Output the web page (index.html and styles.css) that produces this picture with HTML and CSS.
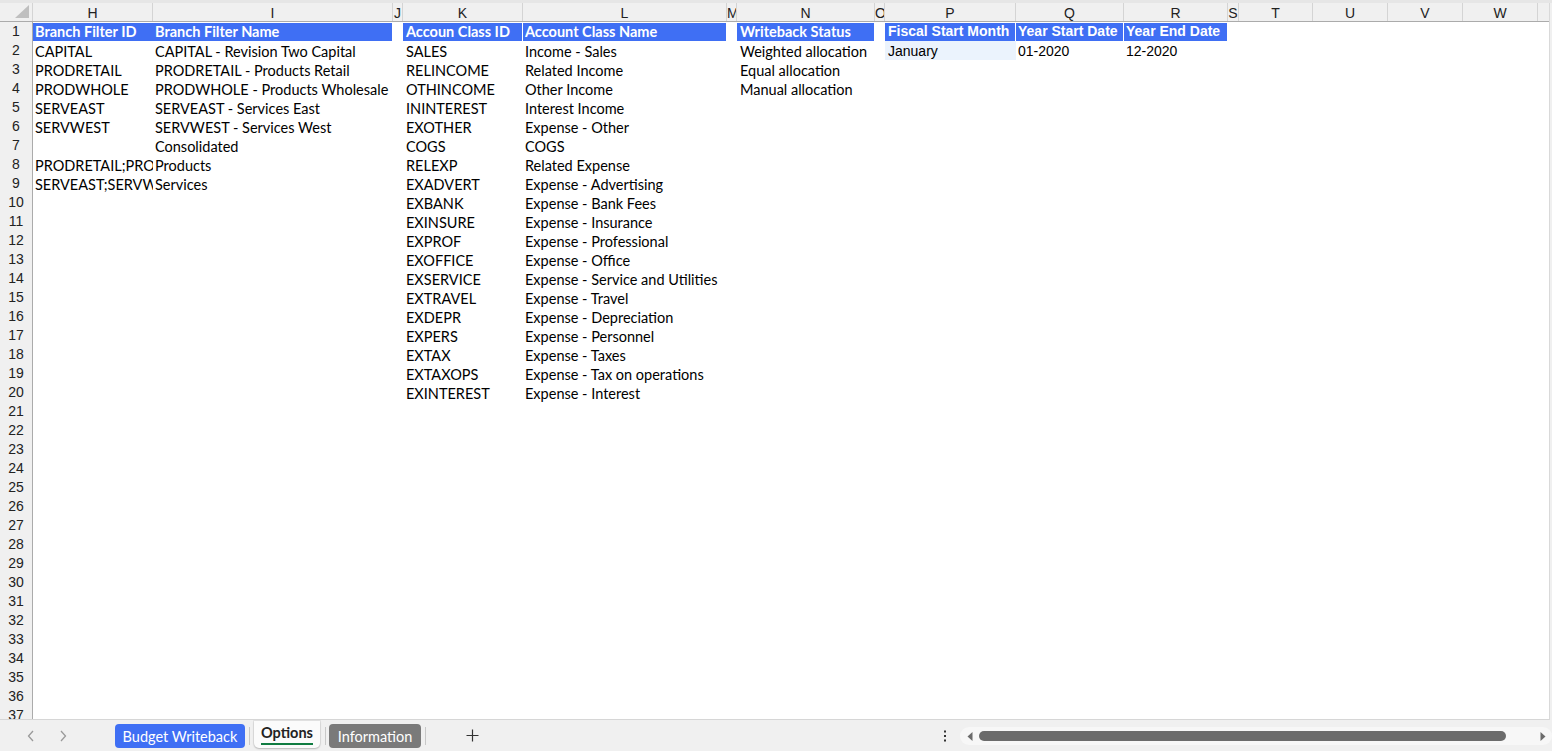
FILE: index.html
```html
<!DOCTYPE html>
<html>
<head>
<meta charset="utf-8">
<link rel="stylesheet" href="styles.css">
</head>
<body>
<div class="app">
  <div class="topstrip"></div>
  <div class="sheet">
    <div class="row colhead">
      <div class="corner"><svg width="14" height="13" viewBox="0 0 14 13"><polygon points="14,0 14,13 0,13" fill="#bfbfbf"/></svg></div>
      <div class="ch">H</div><div class="ch">I</div><div class="ch">J</div><div class="ch">K</div><div class="ch">L</div><div class="ch">M</div><div class="ch">N</div><div class="ch">O</div><div class="ch">P</div><div class="ch">Q</div><div class="ch">R</div><div class="ch">S</div><div class="ch">T</div><div class="ch">U</div><div class="ch">V</div><div class="ch">W</div><div class="ch last"></div>
    </div>
    <div class="row"><div class="rh">1</div>
      <div class="c hd cH nogap">Branch Filter ID</div><div class="c hd cI">Branch Filter Name</div>
      <div class="c hd cK">Accoun Class ID</div><div class="c hd cL">Account Class Name</div>
      <div class="c hd cN">Writeback Status</div>
      <div class="c hd cP arial">Fiscal Start Month</div><div class="c hd cQ arial">Year Start Date</div><div class="c hd cR arial">Year End Date</div>
    </div>
    <div class="row"><div class="rh">2</div>
      <div class="c cH">CAPITAL</div><div class="c cI">CAPITAL - Revision Two Capital</div>
      <div class="c cK">SALES</div><div class="c cL">Income - Sales</div>
      <div class="c cN">Weighted allocation</div>
      <div class="c cP arial sel">January</div><div class="c cQ arial">01-2020</div><div class="c cR arial">12-2020</div>
    </div>
    <div class="row"><div class="rh">3</div>
      <div class="c cH">PRODRETAIL</div><div class="c cI">PRODRETAIL - Products Retail</div>
      <div class="c cK">RELINCOME</div><div class="c cL">Related Income</div>
      <div class="c cN">Equal allocation</div>
    </div>
    <div class="row"><div class="rh">4</div>
      <div class="c cH">PRODWHOLE</div><div class="c cI">PRODWHOLE - Products Wholesale</div>
      <div class="c cK">OTHINCOME</div><div class="c cL">Other Income</div>
      <div class="c cN">Manual allocation</div>
    </div>
    <div class="row"><div class="rh">5</div>
      <div class="c cH">SERVEAST</div><div class="c cI">SERVEAST - Services East</div>
      <div class="c cK">ININTEREST</div><div class="c cL">Interest Income</div>
    </div>
    <div class="row"><div class="rh">6</div>
      <div class="c cH">SERVWEST</div><div class="c cI">SERVWEST - Services West</div>
      <div class="c cK">EXOTHER</div><div class="c cL">Expense - Other</div>
    </div>
    <div class="row"><div class="rh">7</div>
      <div class="c cI">Consolidated</div>
      <div class="c cK">COGS</div><div class="c cL">COGS</div>
    </div>
    <div class="row"><div class="rh">8</div>
      <div class="c cH">PRODRETAIL;PRODWHOLE</div><div class="c cI">Products</div>
      <div class="c cK">RELEXP</div><div class="c cL">Related Expense</div>
    </div>
    <div class="row"><div class="rh">9</div>
      <div class="c cH">SERVEAST;SERVWEST</div><div class="c cI">Services</div>
      <div class="c cK">EXADVERT</div><div class="c cL">Expense - Advertising</div>
    </div>
    <div class="row"><div class="rh">10</div><div class="c cK">EXBANK</div><div class="c cL">Expense - Bank Fees</div></div>
    <div class="row"><div class="rh">11</div><div class="c cK">EXINSURE</div><div class="c cL">Expense - Insurance</div></div>
    <div class="row"><div class="rh">12</div><div class="c cK">EXPROF</div><div class="c cL">Expense - Professional</div></div>
    <div class="row"><div class="rh">13</div><div class="c cK">EXOFFICE</div><div class="c cL">Expense - Office</div></div>
    <div class="row"><div class="rh">14</div><div class="c cK">EXSERVICE</div><div class="c cL">Expense - Service and Utilities</div></div>
    <div class="row"><div class="rh">15</div><div class="c cK">EXTRAVEL</div><div class="c cL">Expense - Travel</div></div>
    <div class="row"><div class="rh">16</div><div class="c cK">EXDEPR</div><div class="c cL">Expense - Depreciation</div></div>
    <div class="row"><div class="rh">17</div><div class="c cK">EXPERS</div><div class="c cL">Expense - Personnel</div></div>
    <div class="row"><div class="rh">18</div><div class="c cK">EXTAX</div><div class="c cL">Expense - Taxes</div></div>
    <div class="row"><div class="rh">19</div><div class="c cK">EXTAXOPS</div><div class="c cL">Expense - Tax on operations</div></div>
    <div class="row"><div class="rh">20</div><div class="c cK">EXINTEREST</div><div class="c cL">Expense - Interest</div></div>
    <div class="row"><div class="rh">21</div></div>
    <div class="row"><div class="rh">22</div></div>
    <div class="row"><div class="rh">23</div></div>
    <div class="row"><div class="rh">24</div></div>
    <div class="row"><div class="rh">25</div></div>
    <div class="row"><div class="rh">26</div></div>
    <div class="row"><div class="rh">27</div></div>
    <div class="row"><div class="rh">28</div></div>
    <div class="row"><div class="rh">29</div></div>
    <div class="row"><div class="rh">30</div></div>
    <div class="row"><div class="rh">31</div></div>
    <div class="row"><div class="rh">32</div></div>
    <div class="row"><div class="rh">33</div></div>
    <div class="row"><div class="rh">34</div></div>
    <div class="row"><div class="rh">35</div></div>
    <div class="row"><div class="rh">36</div></div>
    <div class="row"><div class="rh">37</div></div>
  </div>
  <div class="tabbar">
    <div class="nav"><svg width="8" height="12" viewBox="0 0 8 12"><polyline points="6,1 1.5,6 6,11" fill="none" stroke="#9a9a9a" stroke-width="1.3"/></svg></div>
    <div class="nav"><svg width="8" height="12" viewBox="0 0 8 12"><polyline points="2,1 6.5,6 2,11" fill="none" stroke="#9a9a9a" stroke-width="1.3"/></svg></div>
    <div class="tab blue">Budget Writeback</div>
    <div class="sep"></div>
    <div class="tab active"><span class="ul">Options</span></div>
    <div class="sep"></div>
    <div class="tab gray">Information</div>
    <div class="sep"></div>
    <div class="plus"><svg width="13" height="13" viewBox="0 0 13 13"><path d="M6.5 0.5V12.5M0.5 6.5H12.5" stroke="#333" stroke-width="1.2"/></svg></div>
    <div class="right">
      <div class="dots"><svg width="4" height="14" viewBox="0 0 4 14"><rect x="1" y="1.5" width="2" height="2" fill="#333"/><rect x="1" y="6" width="2" height="2" fill="#333"/><rect x="1" y="10.5" width="2" height="2" fill="#333"/></svg></div>
      <div class="track">
        <svg class="arr" width="6" height="9" viewBox="0 0 6 9"><polygon points="5.5,0 5.5,9 0.5,4.5" fill="#6b6b6b"/></svg>
        <div class="thumb"></div>
        <svg class="arr" width="6" height="9" viewBox="0 0 6 9"><polygon points="0.5,0 0.5,9 5.5,4.5" fill="#6b6b6b"/></svg>
      </div>
    </div>
  </div>
</div>
</body>
</html>
```

FILE: styles.css
```css
* { box-sizing: border-box; }
html, body { margin: 0; padding: 0; }
body { width: 1552px; height: 751px; overflow: hidden; background: #f0f0f0; font-family: "Lato", "Noto Sans", sans-serif; }
.app { width: 1552px; height: 751px; display: flex; flex-direction: column; }
.topstrip { height: 3px; background: #e6e6e6; flex: none; }
.sheet { height: 717px; flex: none; overflow: hidden; background: #fff; width: 1550px; border-right: 1px solid #d9d9d9; border-bottom: 1px solid #d6d6d6; }
.row {
  display: grid;
  grid-template-columns: 33px 120px 240px 10px 120px 204px 10px 138px 10px 131px 108px 104px 11px 74px 75px 75px 75px 1fr;
  height: 19px;
}
.colhead { background: #f0f0f0; border-bottom: 1px solid #ababab; }
.corner { border-right: 1px solid #d4d4d4; display: flex; align-items: flex-end; justify-content: flex-end; padding: 0 3px 3px 0; }
.ch { font-family: "Liberation Sans", Arial, sans-serif; font-size: 14px; color: #222; text-align: center; line-height: 19px; padding-top: 1px; border-right: 1px solid #d4d4d4; overflow: hidden; }
.ch.last { border-right: none; }
.rh { grid-column: 1; grid-row: 1; background: #f0f0f0; border-right: 1px solid #ababab; border-bottom: 1px solid #d4d4d4; font-family: "Liberation Sans", Arial, sans-serif; font-size: 14px; color: #222; text-align: center; line-height: 19px; }
.c { grid-row: 1; font-size: 14.5px; color: #000; line-height: 19px; padding-top: 1px; padding-left: 2px; white-space: nowrap; overflow: hidden; }
.cH { grid-column: 2; }
.cI { grid-column: 3; }
.cK { grid-column: 5; padding-left: 3px; }
.cL { grid-column: 6; }
.cN { grid-column: 8; padding-left: 3px; }
.cP { grid-column: 10; padding-left: 3px; }
.cQ { grid-column: 11; }
.cR { grid-column: 12; }
.hd { background: #3f6ff4; color: #fff; font-weight: 700; line-height: 17px; padding-top: 0; border-top: 1px solid #fff; border-bottom: 1px solid #fff; border-right: 1px solid #fff; }
.hd.nogap { border-right: none; }
.arial { font-family: "Liberation Sans", Arial, sans-serif; font-size: 14px; }
.sel { background: #ebf3fd; border-bottom: 1px solid #fff; line-height: 18px; }
.tabbar { flex: 1; display: flex; align-items: flex-start; padding-left: 15px; font-size: 14.5px; }
.nav { width: 32px; height: 31px; display: flex; align-items: center; justify-content: center; }
.tab { height: 24px; margin-top: 4px; border-radius: 4px; display: flex; align-items: center; justify-content: center; }
.tab.blue { width: 130px; margin-left: 36px; background: #3f6ff4; color: #fff; }
.tab.gray { width: 92px; margin-left: 3px; background: #7a7a7a; color: #fff; }
.tab.active { width: 66px; height: 27px; margin-top: 1px; margin-left: 4px; background: #fbfbfb; border-radius: 0 0 5px 5px; box-shadow: 0 1px 2px rgba(0,0,0,0.18), 0 0 0 1px #e2e2e2; color: #222; font-weight: 700; }
.ul { border-bottom: 2px solid #107c41; line-height: 18px; padding-bottom: 1px; }
.sep { width: 1px; height: 18px; margin: 7px 0 0 4px; background: #c8c8c8; }
.tab.active + .sep { margin-left: 5px; }
.plus { margin-left: 40px; height: 31px; display: flex; align-items: center; }
.right { margin-left: auto; display: flex; align-items: flex-start; }
.dots { width: 10px; height: 31px; display: flex; align-items: center; justify-content: center; }
.track { margin-left: 10px; margin-top: 7px; width: 592px; height: 18px; border-radius: 9px; background: #f7f7f7; display: flex; align-items: center; padding: 0 5px 0 7px; }
.thumb { width: 527px; height: 10px; border-radius: 5px; background: #6b6b6b; margin: 0 34px 0 6px; }
```
